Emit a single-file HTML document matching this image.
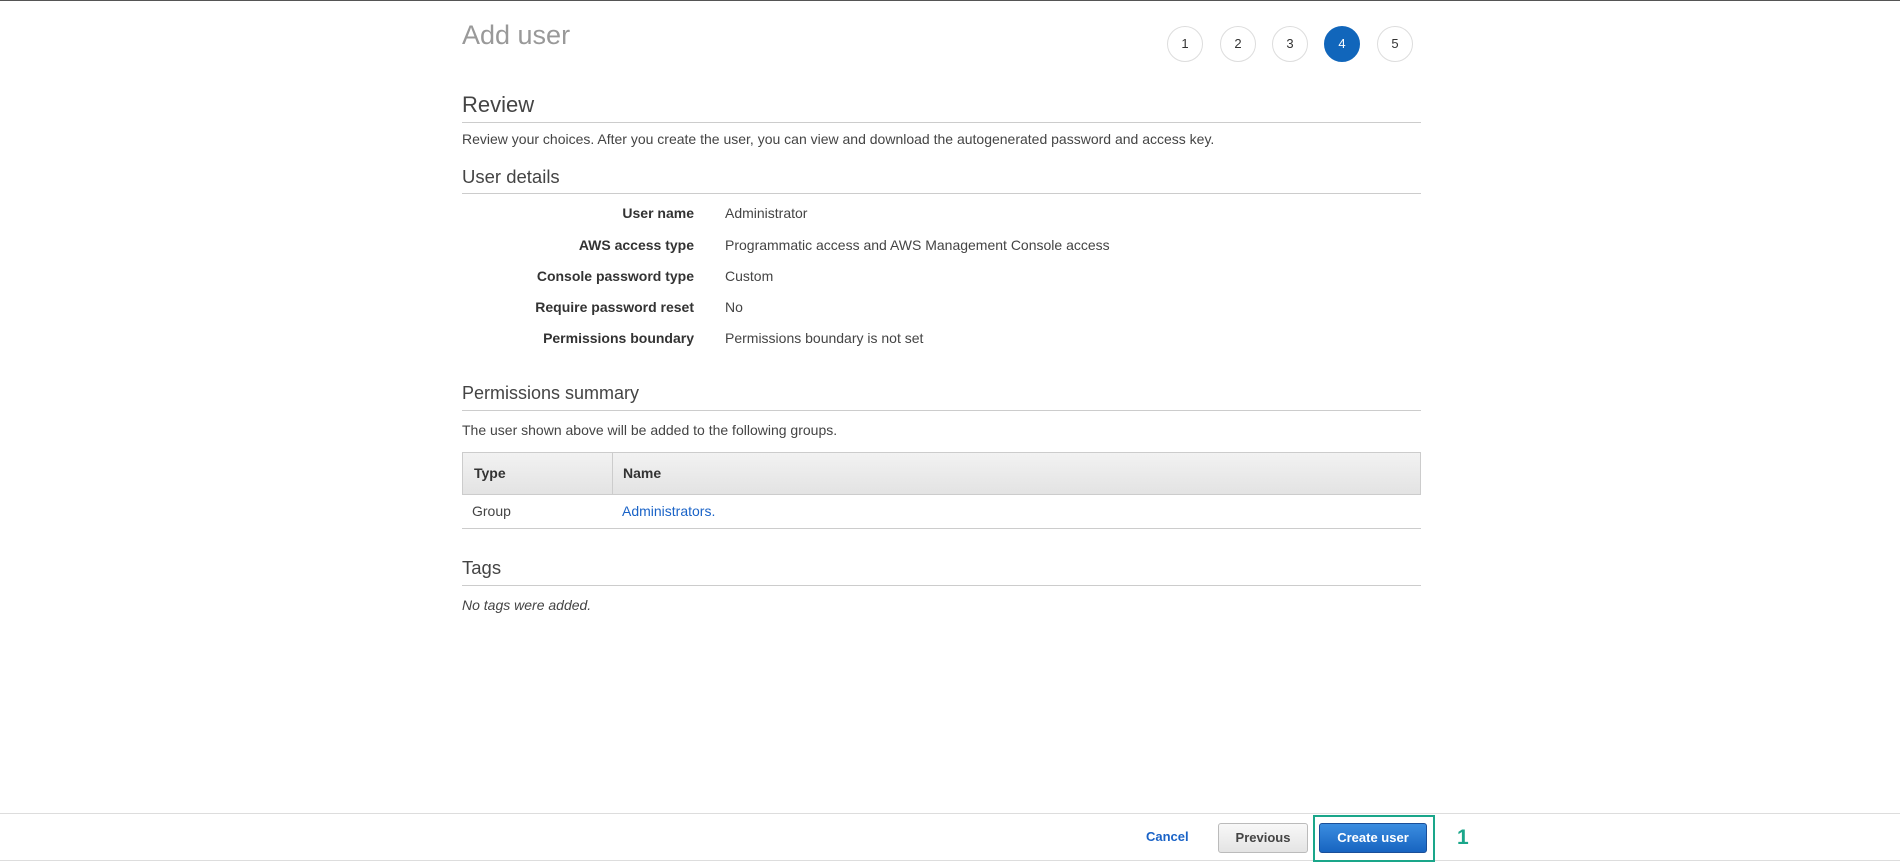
<!DOCTYPE html>
<html><head><style>
body{margin:0;width:1900px;height:864px;position:relative;background:#fff;font-family:"Liberation Sans",Arial,sans-serif;color:#444;font-size:14px;overflow:hidden}
.a{position:absolute;white-space:nowrap}
.h{font-size:18.5px;color:#444}
.line{position:absolute;left:462px;width:959px;height:1px;background:#ccc}
.c{position:absolute;top:26px;width:34px;height:34px;border:1px solid #ddd;border-radius:50%;text-align:center;line-height:34px;font-size:13px;color:#333;background:#fff}
.lab{position:absolute;right:1206px;font-weight:bold;color:#333;white-space:nowrap}
.val{position:absolute;left:725px;color:#444;white-space:nowrap}
</style></head><body>
<div style="position:absolute;left:0;top:0;width:1900px;height:1px;background:#555"></div>
<div class="a" style="left:462px;top:20px;font-size:27px;color:#999">Add user</div>
<div class="c" style="left:1167px">1</div>
<div class="c" style="left:1220px">2</div>
<div class="c" style="left:1272px">3</div>
<div class="c" style="left:1324px;background:#1166bb;border-color:#1166bb;color:#fff">4</div>
<div class="c" style="left:1377px">5</div>
<div class="a h" style="left:462px;top:92px;font-size:22px">Review</div>
<div class="line" style="top:122px"></div>
<div class="a" style="left:462px;top:131px;font-size:14px">Review your choices. After you create the user, you can view and download the autogenerated password and access key.</div>
<div class="a h" style="left:462px;top:166px">User details</div>
<div class="line" style="top:193px"></div>
<div class="lab" style="top:205px">User name</div><div class="val" style="top:205px">Administrator</div>
<div class="lab" style="top:237px">AWS access type</div><div class="val" style="top:237px">Programmatic access and AWS Management Console access</div>
<div class="lab" style="top:268px">Console password type</div><div class="val" style="top:268px">Custom</div>
<div class="lab" style="top:299px">Require password reset</div><div class="val" style="top:299px">No</div>
<div class="lab" style="top:330px">Permissions boundary</div><div class="val" style="top:330px">Permissions boundary is not set</div>
<div class="a h" style="left:462px;top:383px;font-size:18px">Permissions summary</div>
<div class="line" style="top:410px"></div>
<div class="a" style="left:462px;top:422px;font-size:14px">The user shown above will be added to the following groups.</div>
<div style="position:absolute;left:462px;top:452px;width:957px;height:41px;border:1px solid #ccc;background:linear-gradient(#f2f2f2,#e3e3e3)"></div>
<div style="position:absolute;left:612px;top:453px;width:1px;height:41px;background:#ccc"></div>
<div class="a" style="left:474px;top:465px;font-weight:bold;color:#333">Type</div>
<div class="a" style="left:623px;top:465px;font-weight:bold;color:#333">Name</div>
<div class="a" style="left:472px;top:503px">Group</div>
<div class="a" style="left:622px;top:503px;color:#1a63c7">Administrators.</div>
<div class="line" style="top:528px"></div>
<div class="a h" style="left:462px;top:557px">Tags</div>
<div class="line" style="top:585px"></div>
<div class="a" style="left:462px;top:597px;font-style:italic">No tags were added.</div>
<div style="position:absolute;left:0;top:813px;width:1900px;height:1px;background:#ddd"></div>
<div style="position:absolute;left:0;top:860px;width:1900px;height:1px;background:#ddd"></div>
<div class="a" style="left:1146px;top:829px;font-weight:bold;color:#1a63c7;font-size:13px">Cancel</div>
<div style="position:absolute;left:1218px;top:823px;width:88px;height:28px;border:1px solid #bbb;border-radius:3px;background:linear-gradient(#f8f8f8,#e4e4e4);text-align:center;line-height:28px;font-weight:bold;color:#444;font-size:13px">Previous</div>
<div style="position:absolute;left:1313px;top:815px;width:118px;height:43px;border:2px solid #1aa68a"></div>
<div style="position:absolute;left:1319px;top:823px;width:106px;height:28px;border:1px solid #1a4f99;border-radius:3px;background:linear-gradient(#3b8de0,#1764c0);text-align:center;line-height:28px;font-weight:bold;color:#fff;font-size:13px">Create user</div>
<div class="a" style="left:1457px;top:826px;font-weight:bold;color:#1aa68a;font-size:21px">1</div>
</body></html>
